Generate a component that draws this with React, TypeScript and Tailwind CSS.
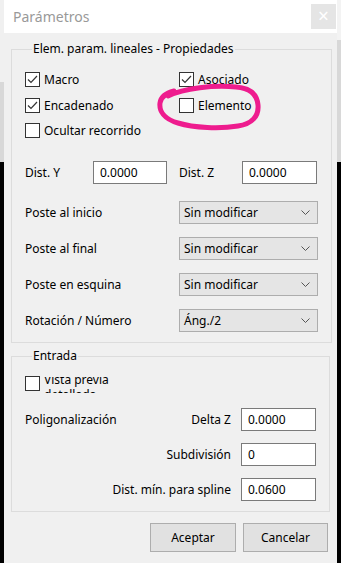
const font = { fontFamily: '"Noto Sans", "Open Sans", sans-serif' };

function Check({ checked }: { checked?: boolean }) {
  return (
    <span className="flex h-[15px] w-[15px] shrink-0 items-center justify-center border border-[#333333] bg-white">
      {checked && (
        <svg width="11" height="9" viewBox="0 0 11 9">
          <path d="M1 4.5 L4 7.5 L10 1" fill="none" stroke="#333333" strokeWidth="1.2" />
        </svg>
      )}
    </span>
  );
}

function CheckItem({ label, checked, className }: { label: string; checked?: boolean; className?: string }) {
  return (
    <div className={"flex h-[15px] items-center gap-[4px] " + (className ?? "")}>
      <Check checked={checked} />
      <span className="whitespace-nowrap leading-[15px]">{label}</span>
    </div>
  );
}

function TextBox({ value, className }: { value: string; className?: string }) {
  return (
    <div className={"flex h-[23px] items-center border border-[#7a7a7a] bg-white pl-[6px] " + (className ?? "")}>
      {value}
    </div>
  );
}

function Select({ value }: { value: string }) {
  return (
    <div className="flex h-[23px] w-[139px] items-center justify-between border border-[#adadad] bg-[#e5e5e5] pl-[4px] pr-[7px]">
      <span>{value}</span>
      <svg width="9" height="5" viewBox="0 0 9 5">
        <path d="M0.5 0.5 L4.5 4.5 L8.5 0.5" fill="none" stroke="#555555" strokeWidth="1" />
      </svg>
    </div>
  );
}

const selects = [
  { label: "Poste al inicio", value: "Sin modificar" },
  { label: "Poste al final", value: "Sin modificar" },
  { label: "Poste en esquina", value: "Sin modificar" },
  { label: "Rotación / Número", value: "Áng./2" },
];

export default function App() {
  return (
    <div className="relative flex h-[563px] w-[341px] overflow-hidden text-[12px] text-black" style={font}>
      {/* window behind, left */}
      <div className="flex w-[4px] flex-col">
        <div className="h-[82px] bg-[#f0f0f0]" />
        <div className="h-[80px] bg-[#d8d8d8]" />
        <div className="flex-1 bg-black" />
      </div>

      <div className="flex w-[333px] flex-col bg-[#f0f0f0]">
        <div className="flex h-[33px] items-center justify-between bg-white pl-[9px] pr-[1px]">
          <span className="text-[14px] text-[#999999]">Parámetros</span>
          <div className="mt-[4px] flex h-[25px] w-[25px] items-center justify-center self-start bg-[#e5e5e5] text-[19px] leading-none text-white">
            ×
          </div>
        </div>

        <div className="flex flex-col px-[7px] pt-[8px]">
          <fieldset className="border border-[#dcdcdc] px-[13px] pb-[10px] pt-[15px]">
            <legend className="ml-[7px] px-[1px] leading-[16px]">Elem. param. lineales - Propiedades</legend>
            <div className="flex">
              <CheckItem label="Macro" checked className="w-[154px]" />
              <CheckItem label="Asociado" checked />
            </div>
            <div className="mt-[11px] flex">
              <CheckItem label="Encadenado" checked className="w-[154px]" />
              <CheckItem label="Elemento" />
            </div>
            <div className="mt-[10px] flex">
              <CheckItem label="Ocultar recorrido" className="w-[141px] overflow-hidden" />
            </div>

            <div className="mt-[23px] flex items-center">
              <span className="w-[68px]">Dist. Y</span>
              <TextBox value="0.0000" className="w-[74px]" />
              <span className="ml-[12px] w-[63px]">Dist. Z</span>
              <TextBox value="0.0000" className="w-[75px]" />
            </div>

            <div className="mt-[17px] flex flex-col gap-[13px]">
              {selects.map((s) => (
                <div key={s.label} className="flex items-center">
                  <span className="w-[154px]">{s.label}</span>
                  <Select value={s.value} />
                </div>
              ))}
            </div>
          </fieldset>

          <fieldset className="mt-[5px] border border-[#dcdcdc] px-[13px] pb-[10px] pt-[12px]">
            <legend className="ml-[7px] px-[1px] leading-[16px]">Entrada</legend>
            <div className="flex items-start gap-[4px]">
              <Check />
              <div className="mt-[1px] h-[16px] overflow-hidden">
                <div className="-mt-[5px] leading-[15px]">
                  Vista previa
                  <br />
                  detallada
                </div>
              </div>
            </div>

            <div className="mt-[15px] flex flex-col gap-[12px]">
              <div className="flex items-center">
                <span className="flex-1">Poligonalización</span>
                <span className="mr-[10px]">Delta Z</span>
                <TextBox value="0.0000" className="w-[75px]" />
              </div>
              <div className="flex items-center justify-end">
                <span className="mr-[10px]">Subdivisión</span>
                <TextBox value="0" className="w-[75px]" />
              </div>
              <div className="flex items-center justify-end">
                <span className="mr-[10px]">Dist. mín. para spline</span>
                <TextBox value="0.0600" className="w-[75px]" />
              </div>
            </div>
          </fieldset>

          <div className="mt-[11px] flex justify-end gap-[7px] pr-[2px]">
            <button className="flex h-[29px] w-[86px] items-center justify-center border border-[#adadad] bg-[#e1e1e1]">
              Aceptar
            </button>
            <button className="flex h-[29px] w-[85px] items-center justify-center border border-[#adadad] bg-[#e1e1e1]">
              Cancelar
            </button>
          </div>
        </div>
      </div>

      {/* window behind, right */}
      <div className="flex w-[4px] flex-col">
        <div className="h-[40px] bg-[#f3f3f3]" />
        <div className="h-[122px] bg-[#d8d8d8]" />
        <div className="flex-1 bg-black" />
      </div>

      {/* hand-drawn highlight */}
      <svg className="pointer-events-none absolute left-[154px] top-[82px]" width="110" height="52" viewBox="0 0 110 52">
        <path
          d="M14 14 C30 6 60 3 82 5 C96 6 103 12 104 23 C105 34 98 42 84 44 C66 47 40 46 24 41 C10 37 5 29 6 21 C7 14 12 11 20 9"
          fill="none"
          stroke="#ee1c8e"
          strokeWidth="5"
          strokeLinecap="round"
        />
      </svg>
    </div>
  );
}
